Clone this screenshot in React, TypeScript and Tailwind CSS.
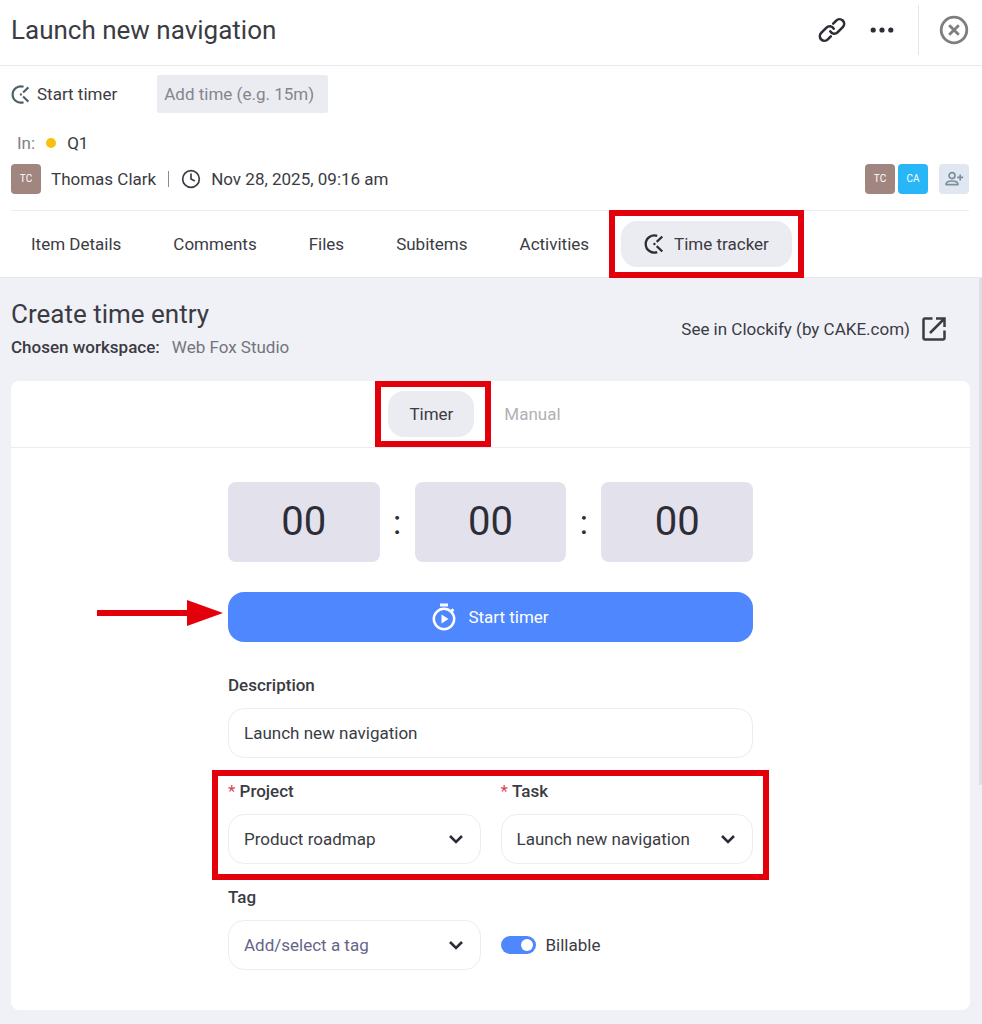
import React, { useState } from 'react';
import { Clock } from 'lucide-react';

interface IconProps {
  className?: string;
}

interface SelectFieldProps {
  id: string;
  label: string;
  options: string[];
  required?: boolean;
  muted?: boolean;
}

const ClockifyIcon = ({ className }: IconProps) => (
  <svg viewBox="0 0 20 20" fill="none" className={className}>
    <path d="M13.2 1.900A8.600 8.600 0 1 0 13.2 18.100" stroke="currentColor" strokeWidth="2.3" />
    <path d="M12.700 7.900l5.600-5.400M12.700 12.100l5.600 5.400" stroke="currentColor" strokeWidth="2.2" />
    <circle cx="10.4" cy="10" r="1.2" fill="currentColor" />
  </svg>
);

const LinkIcon = () => (
  <svg viewBox="0 0 28 28" fill="none" stroke="currentColor" strokeWidth="2.6" strokeLinecap="round" className="size-7">
    <path d="M15.2 7.6l3-3a4.6 4.6 0 0 1 6.6 6.5l-5.3 5.3a4.6 4.6 0 0 1-7.2-1" />
    <path d="M12.8 20.4l-3 3a4.6 4.6 0 0 1-6.6-6.5l5.3-5.3a4.6 4.6 0 0 1 7.2 1" />
  </svg>
);

const DotsIcon = () => (
  <svg viewBox="0 0 24 24" fill="currentColor" className="size-6">
    <circle cx="3.2" cy="12" r="2.6" />
    <circle cx="12" cy="12" r="2.6" />
    <circle cx="20.8" cy="12" r="2.6" />
  </svg>
);

const CloseIcon = () => (
  <svg viewBox="0 0 30 30" fill="none" stroke="currentColor" className="size-[30px]">
    <circle cx="15" cy="15" r="12.8" strokeWidth="2.8" />
    <path d="M10.2 10.2l9.6 9.6M19.8 10.2l-9.6 9.6" strokeWidth="2.8" />
  </svg>
);

const AddUserIcon = () => (
  <svg viewBox="0 0 20 16" fill="none" stroke="currentColor" strokeWidth="1.7" className="h-4 w-5">
    <circle cx="8" cy="4.6" r="3" />
    <path d="M2 13.6c0-2.4 2.6-3.6 6-3.6s6 1.2 6 3.6z" strokeLinejoin="round" />
    <path d="M16.2 3.4v6M13.2 6.4h6" />
  </svg>
);

const ExternalIcon = () => (
  <svg viewBox="0 0 24 24" fill="none" stroke="currentColor" strokeWidth="2.5" className="size-6">
    <path d="M10.5 1.5H2.7a1.2 1.2 0 0 0-1.2 1.2v18.600a1.2 1.2 0 0 0 1.2 1.2h18.600a1.2 1.2 0 0 0 1.2-1.2V13.5" />
    <path d="M8 16L22 2M14 1.5h8.5V10" />
  </svg>
);

const StopwatchIcon = () => (
  <svg viewBox="0 0 24 28" fill="none" stroke="currentColor" strokeWidth="2.5" className="h-7 w-6">
    <circle cx="12" cy="16" r="10.2" />
    <path d="M8 2h8M19.2 8.4l2.2-2.2" strokeWidth="2.8" />
    <path d="M9.5 11.5v9l7-4.5z" fill="currentColor" stroke="none" />
  </svg>
);

const ChevronIcon = () => (
  <svg
    viewBox="0 0 16 10"
    fill="none"
    stroke="#2d2d37"
    strokeWidth="2.6"
    className="pointer-events-none absolute right-[17px] top-5 h-[10px] w-4"
  >
    <path d="M2 2l6 6 6-6" />
  </svg>
);

// Red frame drawn around the element it is placed in
const Highlight = ({ className }: IconProps) => (
  <div className={`pointer-events-none absolute border-[6px] border-[#e3000b] ${className}`} />
);

const SelectField = ({ id, label, options, required, muted }: SelectFieldProps) => (
  <div>
    <label htmlFor={id} className="block leading-[22px] font-medium">
      {required && <span className="font-normal text-[#d9455a]">* </span>}
      {label}
    </label>
    <div className="relative mt-3">
      <select
        id={id}
        className={`h-[50px] w-full appearance-none rounded-2xl border border-[#ececf1] bg-white pl-[15px] pr-10 ${
          muted ? 'text-[#65658a]' : 'text-[#3b3b43]'
        }`}
      >
        {options.map((option) => (
          <option key={option}>{option}</option>
        ))}
      </select>
      <ChevronIcon />
    </div>
  </div>
);

const tabs = ['Item Details', 'Comments', 'Files', 'Subitems', 'Activities'];

const App = () => {
  const [description, setDescription] = useState('Launch new navigation');
  const [billable, setBillable] = useState(true);

  return (
    <div className="relative min-h-screen bg-[#f0f1f7] font-['Roboto',sans-serif] text-[17px] leading-6 text-[#3b3b43]">
      <div className="bg-white">
        {/* Title bar */}
        <header className="flex h-[66px] items-center border-b border-[#e9e9ec] pb-[6px] pl-[11px] pr-[13px]">
          <h1 className="flex-1 text-[26px] leading-8">Launch new navigation</h1>
          <div className="flex items-center gap-6 text-[#2d2d37]">
            <button aria-label="Copy link"><LinkIcon /></button>
            <button aria-label="More"><DotsIcon /></button>
          </div>
          <div className="ml-6 mr-5 h-[50px] w-px bg-[#e6e6e8]" />
          <button aria-label="Close" className="text-[#7e7e80]"><CloseIcon /></button>
        </header>

        {/* Quick timer */}
        <div className="flex items-center gap-10 px-[11px] pt-[9px]">
          <button className="flex items-center gap-[7px]">
            <ClockifyIcon className="size-[19px] text-[#4c6069]" />
            Start timer
          </button>
          <input
            type="text"
            aria-label="Add time"
            placeholder="Add time (e.g. 15m)"
            className="h-[38px] w-[171px] rounded-xs bg-[#ebecf2] px-[7px] placeholder:text-[#85858c]"
          />
        </div>

        <div className="ml-[11px] mr-[13px] border-b border-[#ececee] pb-4">
          <div className="flex items-center pt-[18px] pl-[6px]">
            <span className="text-[#818188]">In:</span>
            <span className="mx-[11px] size-[10px] rounded-full bg-[#fbc00d]" />
            Q1
          </div>
          <div className="mt-[9px] flex items-center">
            <span className="flex size-[30px] items-center justify-center rounded-sm bg-[#a1867f] text-[10px] text-white">TC</span>
            <span className="ml-2.5">Thomas Clark</span>
            <span className="mx-3 h-4 w-px bg-[#8c8c92]" />
            <Clock className="size-5" />
            <span className="ml-2.5">Nov 28, 2025, 09:16 am</span>
            <div className="ml-auto flex gap-[3px] text-[10px] text-white">
              <span className="flex size-[30px] items-center justify-center rounded-sm bg-[#a1867f]">TC</span>
              <span className="flex size-[30px] items-center justify-center rounded-sm bg-[#29b6f6]">CA</span>
              <button
                aria-label="Add person"
                className="ml-2 flex size-[30px] items-center justify-center rounded-sm bg-[#e0e7f1] text-[#7b909e]"
              >
                <AddUserIcon />
              </button>
            </div>
          </div>
        </div>

        {/* Tabs */}
        <nav className="flex h-[67px] items-center gap-3 border-b border-[#e7e8ee] pl-[11px]">
          {tabs.map((tab) => (
            <button key={tab} className="h-[46px] px-5">{tab}</button>
          ))}
          <div className="relative">
            <button className="flex h-[46px] items-center gap-2.5 rounded-2xl bg-[#ebecf1] pl-[23px] pr-[23px]">
              <ClockifyIcon className="size-5 text-[#2d2d37]" />
              Time tracker
            </button>
            <Highlight className="-inset-x-3 -inset-y-[11px]" />
          </div>
        </nav>
      </div>

      <div className="absolute right-0 top-[278px] h-[507px] w-[3px] bg-[#dfe0e6]" />

      <main className="px-3 pb-[14px] pt-5 pl-[11px]">
        <div className="flex items-start justify-between">
          <div>
            <h2 className="text-[26px] leading-8">Create time entry</h2>
            <p className="mt-[5px]">
              <span className="font-medium">Chosen workspace:</span>
              <span className="ml-3 text-[#74747c]">Web Fox Studio</span>
            </p>
          </div>
          <a href="#" className="mt-[19px] mr-6 flex items-center gap-3">
            See in Clockify (by CAKE.com)
            <ExternalIcon />
          </a>
        </div>

        <section className="mt-[22px] rounded-lg bg-white pb-10">
          <div className="flex h-[67px] items-center justify-center gap-2.5 border-b border-[#ececf0] pr-3">
            <div className="relative">
              <button className="h-[46px] rounded-2xl bg-[#ebecf1] px-[21px]">Timer</button>
              <Highlight className="-inset-y-[10px] -left-[13px] -right-[17px]" />
            </div>
            <button className="px-5 text-[#b1b1b6]">Manual</button>
          </div>

          <form className="mx-auto mt-[34px] w-[525px] max-w-full" onSubmit={(e) => e.preventDefault()}>
            <div className="flex items-center text-[40px] text-[#2d2d37]">
              <div className="flex h-20 flex-1 items-center justify-center rounded-lg bg-[#e2e1ec]">00</div>
              <span className="w-[35px] text-center text-[34px]">:</span>
              <div className="flex h-20 flex-1 items-center justify-center rounded-lg bg-[#e2e1ec]">00</div>
              <span className="w-[35px] text-center text-[34px]">:</span>
              <div className="flex h-20 flex-1 items-center justify-center rounded-lg bg-[#e2e1ec]">00</div>
            </div>

            <div className="relative mt-[30px]">
              <button className="flex h-[50px] w-full items-center justify-center gap-3 rounded-2xl bg-[#4f87ff] text-white">
                <StopwatchIcon />
                Start timer
              </button>
              <svg viewBox="0 0 126 26" fill="#e3000b" className="absolute right-full top-2 mr-[5px] h-[26px] w-[126px]">
                <path d="M0 10h90V0l36 13-36 13V16H0z" />
              </svg>
            </div>

            <div className="mt-8">
              <label htmlFor="description" className="block leading-[22px] font-medium">Description</label>
              <input
                id="description"
                type="text"
                value={description}
                onChange={(e) => setDescription(e.target.value)}
                className="mt-3 h-[50px] w-full rounded-2xl border border-[#ececf1] bg-white px-[15px]"
              />
            </div>

            <div className="relative mt-[22px] grid grid-cols-2 gap-5">
              <SelectField id="project" label="Project" options={['Product roadmap']} required />
              <SelectField id="task" label="Task" options={['Launch new navigation']} required />
              <Highlight className="-inset-x-4 -top-[10px] -bottom-4" />
            </div>

            <div className="mt-[22px] grid grid-cols-2 gap-5">
              <SelectField id="tag" label="Tag" options={['Add/select a tag']} muted />
              <label className="flex h-[50px] items-center gap-2.5 self-end">
                <input
                  type="checkbox"
                  role="switch"
                  checked={billable}
                  onChange={(e) => setBillable(e.target.checked)}
                  className="h-[18px] w-[35px] appearance-none rounded-full bg-gray-300 p-[3px] before:block before:size-3 before:rounded-full before:bg-white checked:bg-[#4f87ff] checked:before:ml-[17px]"
                />
                Billable
              </label>
            </div>
          </form>
        </section>
      </main>
    </div>
  );
};

export default App;
